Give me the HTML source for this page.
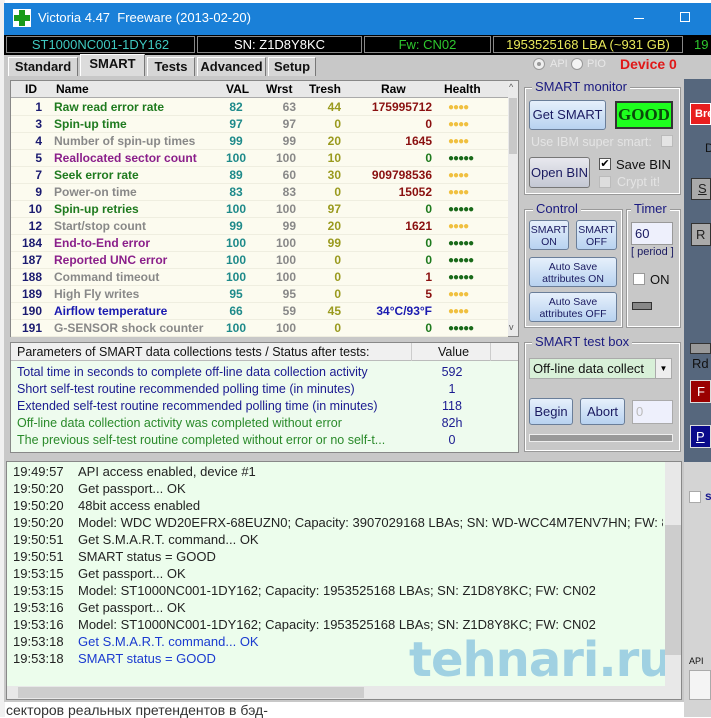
<!DOCTYPE html>
<html><head><meta charset="utf-8"><style>
*{margin:0;padding:0;box-sizing:border-box}
body{width:711px;height:717px;overflow:hidden;background:#fff;font-family:"Liberation Sans",sans-serif;position:relative;font-size:12px}
.a{position:absolute}
.blk{position:absolute;top:36px;height:17px;background:#000;border:1px solid #888;font-size:13px;text-align:center;line-height:15px}
.tab{position:absolute;top:57px;height:19px;background:#d6d6d6;border:1px solid #fff;border-right-color:#777;border-bottom:none;font-weight:bold;font-size:13px;text-align:center;line-height:18px;color:#111}
.row{position:absolute;left:11px;width:497px;height:17px;font-weight:bold;font-size:12px;line-height:17px;border-bottom:1px solid #efeee0}
.row span{position:absolute}
.grp{position:absolute;border:1px solid #fff;outline:1px solid #999;}
.gt{position:absolute;background:#c8c8c8;color:#1a1a80;font-size:13px;padding:0 3px;line-height:14px}
.btn{position:absolute;background:linear-gradient(#e6f0fb,#b8d2f0);border:1px solid #6a7e99;border-radius:3px;color:#1a1a60;text-align:center;font-size:13px;white-space:nowrap;overflow:hidden}
.log{position:absolute;left:13px;font-size:13px;line-height:17px;color:#222;white-space:nowrap}
.log b{font-weight:normal;position:absolute;left:65px}
.pr{position:absolute;left:17px;font-size:12.5px;line-height:17px;color:#1a1a90;white-space:nowrap}
.pr i{font-style:normal;position:absolute;left:395px;width:80px;text-align:center}
</style></head><body>
<div class="a" style="left:0;top:0;width:5px;height:717px;background:#f0f0f0"></div>
<div class="a" style="left:4px;top:3px;width:707px;height:30px;background:#1a80d8"></div>
<div class="a" style="left:13px;top:9px;width:18px;height:18px;background:#fff"></div>
<div class="a" style="left:19px;top:10px;width:6px;height:16px;background:#1a9a1a"></div>
<div class="a" style="left:14px;top:15px;width:16px;height:6px;background:#1a9a1a"></div>
<div class="a" style="left:38px;top:10px;color:#fff;font-size:13px">Victoria 4.47&nbsp; Freeware (2013-02-20)</div>
<div class="a" style="left:634px;top:18px;width:10px;height:1px;background:#fff"></div>
<div class="a" style="left:680px;top:12px;width:10px;height:10px;border:1px solid #fff"></div>
<div class="a" style="left:4px;top:33px;width:707px;height:22px;background:#000"></div>
<div class="a" style="left:4px;top:33px;width:707px;height:2px;background:#1a80d8"></div>
<div class="blk" style="left:6px;width:189px;color:#3fc8c0">ST1000NC001-1DY162</div>
<div class="blk" style="left:197px;width:165px;color:#fff">SN: Z1D8Y8KC</div>
<div class="blk" style="left:364px;width:127px;color:#2ec82e">Fw: CN02</div>
<div class="blk" style="left:493px;width:190px;color:#e8e85a">1953525168 LBA (~931 GB)</div>
<div class="a" style="left:694px;top:37px;color:#2ec82e;font-size:13px">19</div>
<div class="a" style="left:4px;top:55px;width:680px;height:405px;background:#c8c8c8"></div>
<div class="tab" style="left:8px;width:70px">Standard</div>
<div class="tab" style="left:80px;top:54px;height:22px;width:65px;background:#dcdcdc">SMART</div>
<div class="tab" style="left:147px;width:48px">Tests</div>
<div class="tab" style="left:197px;width:69px">Advanced</div>
<div class="tab" style="left:268px;width:48px">Setup</div>
<div class="a" style="left:533px;top:58px;width:12px;height:12px;border-radius:50%;background:#eee;border:1px solid #999"></div>
<div class="a" style="left:537px;top:62px;width:4px;height:4px;border-radius:50%;background:#999"></div>
<div class="a" style="left:550px;top:58px;color:#e8e8e8;font-size:11px">API</div>
<div class="a" style="left:571px;top:58px;width:12px;height:12px;border-radius:50%;background:#f4f4f4;border:1px solid #999"></div>
<div class="a" style="left:587px;top:58px;color:#e8e8e8;font-size:11px">PIO</div>
<div class="a" style="left:620px;top:56px;color:#e01818;font-size:14px;font-weight:bold">Device 0</div>
<div class="a" style="left:10px;top:80px;width:509px;height:257px;background:#fcfbef;border:1px solid #888"></div>
<div class="a" style="left:11px;top:81px;width:497px;height:17px;background:#e8e8e8;border-bottom:1px solid #aaa;font-weight:bold;font-size:12px;line-height:17px">
<span class="a" style="left:14px">ID</span><span class="a" style="left:45px">Name</span><span class="a" style="left:215px">VAL</span><span class="a" style="left:255px">Wrst</span><span class="a" style="left:298px">Tresh</span><span class="a" style="left:370px">Raw</span><span class="a" style="left:433px">Health</span></div>
<div class="a" style="left:508px;top:81px;width:10px;height:255px;background:#eaeaea"></div>
<div class="a" style="left:509px;top:98px;width:8px;height:56px;background:#c8c8c8"></div>
<div class="a" style="left:509px;top:82px;font-size:9px;color:#555">^</div>
<div class="a" style="left:509px;top:322px;font-size:9px;color:#555">v</div>
<div id="rows"></div>
<div class="a" style="left:10px;top:342px;width:509px;height:111px;background:#eefbee;border:1px solid #888"></div>
<div class="a" style="left:11px;top:343px;width:507px;height:18px;background:#f0f0f0;border-bottom:1px solid #bbb;font-size:12.5px;line-height:18px;color:#111"><span class="a" style="left:6px">Parameters of SMART data collections tests / Status after tests:</span><span class="a" style="left:400px;border-left:1px solid #ccc;padding-left:26px;width:80px;border-right:1px solid #ccc">Value</span></div>
<div class="pr" style="top:364px">Total time in seconds to complete off-line data collection activity<i>592</i></div>
<div class="pr" style="top:381px">Short self-test routine recommended polling time (in minutes)<i>1</i></div>
<div class="pr" style="top:398px">Extended self-test routine recommended polling time (in minutes)<i>118</i></div>
<div class="pr" style="top:415px;color:#2a8a2a">Off-line data collection activity was completed without error<i style="color:#1a1a90">82h</i></div>
<div class="pr" style="top:432px;color:#2a8a2a">The previous self-test routine completed without error or no self-t...<i style="color:#1a1a90">0</i></div>
<div class="grp" style="left:525px;top:88px;width:155px;height:106px"></div>
<div class="gt" style="left:532px;top:80px">SMART monitor</div>
<div class="btn" style="left:529px;top:100px;width:77px;height:30px;line-height:28px;font-size:13px">Get SMART</div>
<div class="a" style="left:615px;top:101px;width:58px;height:28px;background:#1eff1e;border:2px solid #333;color:#0a4a0a;font-family:'Liberation Serif',serif;font-weight:bold;font-size:17px;text-align:center;line-height:24px">GOOD</div>
<div class="a" style="left:531px;top:135px;color:#e4e4e4;font-size:12.5px;white-space:nowrap">Use IBM super smart:</div>
<div class="a" style="left:661px;top:135px;width:12px;height:12px;background:#e4e4e4;border:1px solid #bbb"></div>
<div class="btn" style="left:529px;top:157px;width:61px;height:31px;line-height:29px;background:linear-gradient(#e8e8ee,#c4c8d4);border-color:#777">Open BIN</div>
<div class="a" style="left:599px;top:158px;width:12px;height:12px;background:#fff;border:1px solid #555;font-size:11px;line-height:10px;text-align:center">✔</div>
<div class="a" style="left:616px;top:157px;font-size:13px;color:#111">Save BIN</div>
<div class="a" style="left:599px;top:176px;width:12px;height:12px;background:#ddd;border:1px solid #bbb"></div>
<div class="a" style="left:617px;top:175px;font-size:12.5px;color:#e4e4e4">Crypt it!</div>
<div class="grp" style="left:525px;top:210px;width:97px;height:117px"></div>
<div class="gt" style="left:533px;top:202px">Control</div>
<div class="btn" style="left:529px;top:220px;width:40px;height:30px;font-size:10.5px;line-height:12px;padding-top:3px">SMART<br>ON</div>
<div class="btn" style="left:576px;top:220px;width:41px;height:30px;font-size:10.5px;line-height:12px;padding-top:3px">SMART<br>OFF</div>
<div class="btn" style="left:529px;top:257px;width:88px;height:30px;font-size:10.5px;line-height:12px;padding-top:3px">Auto Save<br>attributes ON</div>
<div class="btn" style="left:529px;top:292px;width:88px;height:30px;font-size:10.5px;line-height:12px;padding-top:3px">Auto Save<br>attributes OFF</div>
<div class="grp" style="left:627px;top:210px;width:53px;height:117px"></div>
<div class="gt" style="left:631px;top:202px">Timer</div>
<div class="a" style="left:631px;top:222px;width:42px;height:23px;background:#eef0fc;border:1px solid #999;font-size:13px;padding:3px 0 0 3px;color:#1a1a60">60</div>
<div class="a" style="left:631px;top:246px;font-size:11px;color:#1a1a60">[ period ]</div>
<div class="a" style="left:633px;top:273px;width:12px;height:12px;background:#fff;border:1px solid #999"></div>
<div class="a" style="left:650px;top:272px;font-size:13px;color:#111">ON</div>
<div class="a" style="left:632px;top:302px;width:20px;height:8px;background:#888;border:1px solid #333"></div>
<div class="grp" style="left:525px;top:343px;width:155px;height:108px"></div>
<div class="gt" style="left:532px;top:335px">SMART test box</div>
<div class="a" style="left:529px;top:358px;width:143px;height:21px;background:#d8f0d8;border:1px solid #aaa;font-size:13px;line-height:19px;padding-left:3px;color:#111">Off-line data collect</div>
<div class="a" style="left:655px;top:359px;width:16px;height:19px;background:#eee;border-left:1px solid #aaa;font-size:8px;text-align:center;line-height:19px">▼</div>
<div class="btn" style="left:529px;top:398px;width:44px;height:27px;line-height:25px">Begin</div>
<div class="btn" style="left:580px;top:398px;width:45px;height:27px;line-height:25px">Abort</div>
<div class="a" style="left:632px;top:400px;width:41px;height:24px;background:#eef0fc;border:1px solid #aaa;color:#bbb;font-size:13px;padding:3px 0 0 3px">0</div>
<div class="a" style="left:529px;top:434px;width:144px;height:8px;background:#999;border:1px solid #eee"></div>
<div class="a" style="left:684px;top:55px;width:27px;height:407px;background:#56677d"></div>
<div class="a" style="left:684px;top:55px;width:27px;height:24px;background:#c8c8c8"></div>
<div class="a" style="left:690px;top:103px;width:21px;height:22px;background:#e81e1e;border:1px solid #fff;color:#fff;font-weight:bold;font-size:11px;line-height:20px;padding-left:4px;overflow:hidden">Bre</div>
<div class="a" style="left:705px;top:141px;font-size:12px;color:#111">D</div>
<div class="a" style="left:691px;top:178px;width:20px;height:22px;background:#aaa;border:1px solid #333;font-size:13px;line-height:20px;padding-left:6px;text-decoration:underline;color:#222">S</div>
<div class="a" style="left:691px;top:223px;width:20px;height:23px;background:#aaa;border:1px solid #333;font-size:13px;line-height:21px;padding-left:4px;color:#222">R</div>
<div class="a" style="left:690px;top:343px;width:21px;height:11px;background:#999;border:1px solid #333"></div>
<div class="a" style="left:692px;top:356px;font-size:13px;color:#111">Rd</div>
<div class="a" style="left:690px;top:380px;width:21px;height:23px;background:#9a0000;border:1px solid #ddd;color:#fff;font-size:13px;line-height:21px;padding-left:6px">F</div>
<div class="a" style="left:690px;top:425px;width:21px;height:23px;background:#0a0a8a;border:1px solid #ddd;color:#fff;font-size:13px;line-height:21px;padding-left:5px;text-decoration:underline">P</div>
<div class="a" style="left:684px;top:462px;width:27px;height:255px;background:#d4d4d4"></div>
<div class="a" style="left:689px;top:491px;width:12px;height:12px;background:#fff;border:1px solid #aaa"></div>
<div class="a" style="left:705px;top:489px;font-size:12px;color:#1a1a90;font-weight:bold">s</div>
<div class="a" style="left:689px;top:656px;font-size:9px;color:#111">API</div>
<div class="a" style="left:689px;top:670px;width:22px;height:30px;background:#f4f4f4;border:1px solid #aaa"></div>
<div class="a" style="left:4px;top:460px;width:680px;height:242px;background:#c8c8c8"></div>
<div class="a" style="left:6px;top:461px;width:676px;height:239px;background:#ecfdec;border:1px solid #888;overflow:hidden">
<div class="a" style="left:402px;top:170px;font-size:48px;font-weight:bold;color:rgba(110,180,220,0.6);font-family:'DejaVu Sans',sans-serif;white-space:nowrap;letter-spacing:-1px">tehnari.ru</div>
</div>
<div class="a" style="left:665px;top:462px;width:16px;height:225px;background:#e8e8e8"></div>
<div class="a" style="left:665px;top:525px;width:16px;height:130px;background:#cdcdcd"></div>
<div class="a" style="left:7px;top:686px;width:674px;height:13px;background:#e8e8e8"></div>
<div class="a" style="left:18px;top:687px;width:346px;height:11px;background:#cdcdcd"></div>
<div class="log" style="top:463px">19:49:57<b>API access enabled, device #1</b></div>
<div class="log" style="top:480px">19:50:20<b>Get passport... OK</b></div>
<div class="log" style="top:497px">19:50:20<b>48bit access enabled</b></div>
<div class="log" style="top:514px;width:650px;overflow:hidden;height:17px">19:50:20<b>Model: WDC WD20EFRX-68EUZN0; Capacity: 3907029168 LBAs; SN: WD-WCC4M7ENV7HN; FW: 82.00</b></div>
<div class="log" style="top:531px">19:50:51<b>Get S.M.A.R.T. command... OK</b></div>
<div class="log" style="top:548px">19:50:51<b>SMART status = GOOD</b></div>
<div class="log" style="top:565px">19:53:15<b>Get passport... OK</b></div>
<div class="log" style="top:582px">19:53:15<b>Model: ST1000NC001-1DY162; Capacity: 1953525168 LBAs; SN: Z1D8Y8KC; FW: CN02</b></div>
<div class="log" style="top:599px">19:53:16<b>Get passport... OK</b></div>
<div class="log" style="top:616px">19:53:16<b>Model: ST1000NC001-1DY162; Capacity: 1953525168 LBAs; SN: Z1D8Y8KC; FW: CN02</b></div>
<div class="log" style="top:633px">19:53:18<b style="color:#1a3ad0">Get S.M.A.R.T. command... OK</b></div>
<div class="log" style="top:650px">19:53:18<b style="color:#1a3ad0">SMART status = GOOD</b></div>
<div class="a" style="left:6px;top:702px;font-size:14px;color:#333;white-space:nowrap">секторов реальных претендентов в бэд-</div>
<script>
var R=[["1","Raw read error rate","#1e7a1e","82","63","44","175995712",0],["3","Spin-up time","#1e7a1e","97","97","0","0",0],["4","Number of spin-up times","#888","99","99","20","1645",0],["5","Reallocated sector count","#8a1e8a","100","100","10","0",1],["7","Seek error rate","#1e7a1e","89","60","30","909798536",0],["9","Power-on time","#888","83","83","0","15052",0],["10","Spin-up retries","#1e7a1e","100","100","97","0",1],["12","Start/stop count","#888","99","99","20","1621",0],["184","End-to-End error","#8a1e8a","100","100","99","0",1],["187","Reported UNC error","#8a1e8a","100","100","0","0",1],["188","Command timeout","#888","100","100","0","1",1],["189","High Fly writes","#888","95","95","0","5",0],["190","Airflow temperature","#1a1ab0","66","59","45","34°C/93°F",0],["191","G-SENSOR shock counter","#888","100","100","0","0",1]];
var h="";R.forEach(function(r,i){var g=r[6]=="0";var rc=r[0]=="190"?"#1a1ab0":(g&&r[7]?"#1e7a1e":"#8a1010");
h+='<div class="row" style="top:'+(99+i*17)+'px"><span style="right:466px;color:#1a1a70">'+r[0]+'</span><span style="left:43px;color:'+r[2]+'">'+r[1]+'</span><span style="left:203px;width:44px;text-align:center;color:#1e8a8a">'+r[3]+'</span><span style="right:212px;color:#888">'+r[4]+'</span><span style="right:167px;color:#9a9a1e">'+r[5]+'</span><span style="right:76px;color:'+rc+'">'+r[6]+'</span><span style="left:437px;letter-spacing:-1px;font-size:10px;color:'+(r[7]?'#1a6a1a':'#f0c040')+'">'+(r[7]?'●●●●●':'●●●●')+'</span></div>';});
document.getElementById("rows").innerHTML=h;
</script>
</body></html>
